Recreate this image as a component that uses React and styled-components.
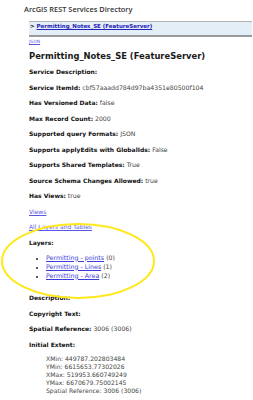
import React from "react";
import styled, { createGlobalStyle } from "styled-components";

const Global = createGlobalStyle`
  html, body { margin: 0; padding: 0; background: #fff; }
  body { font-family: "DejaVu Sans", Verdana, sans-serif; color: #000; }
  a { color: inherit; }
`;

const Page = styled.div`
  position: relative;
  width: 253px;
  height: 400px;
  overflow: hidden;
`;

const Title = styled.div`
  font-family: "Open Sans", "Noto Sans", sans-serif;
  font-weight: 600;
  font-size: 7.4px;
  line-height: 18px;
  color: #333;
  padding-left: 24px;
  white-space: nowrap;
`;

const Content = styled.div`
  padding-left: 29px;
`;

const Crumbs = styled.div`
  margin-top: 3px;
  margin-right: 1px;
  background: #e4eef7;
  border-top: 1px solid #b4b4b4;
  border-bottom: 2px solid #9a9a9a;
  font-size: 5.5px;
  font-weight: bold;
  line-height: 9px;
  padding: 0 0 4px 1px;
  white-space: nowrap;
`;

const CrumbLink = styled.a`
  color: #2424b8;
  text-decoration: underline;
`;

const Small = styled.div`
  margin-top: 1px;
  font-size: 4.5px;
  line-height: 8px;
`;

const LightLink = styled.a`
  color: ${(p) => p.$tone || "#5858e4"};
  text-decoration: underline;
`;

const Heading = styled.h2`
  margin: 4px 0 2.25px;
  font-size: 8.4px;
  line-height: 12px;
  font-weight: bold;
  color: #1a1a1a;
  white-space: nowrap;
`;

const Row = styled.div`
  font-size: 6px;
  line-height: 15.5px;
  white-space: nowrap;
  margin-top: ${(p) => p.$gap || 0}px;
`;

const Label = styled.b`
  font-weight: bold;
  color: #111;
`;

const Value = styled.span`
  font-size: 6.2px;
  color: #444;
`;

const List = styled.ul`
  margin: 2.25px 0 0;
  padding-left: 17px;
  font-size: 6.3px;
  line-height: 9px;
  list-style: disc;
`;

const Item = styled.li`
  white-space: nowrap;
  &::marker { color: #222; font-size: 5px; }
`;

const Extent = styled.div`
  margin-top: 2.8px;
  padding-left: 17px;
  font-size: 6.1px;
  line-height: 7.9px;
  color: #444;
  white-space: nowrap;
`;

const Circle = styled.svg`
  position: absolute;
  left: 0;
  top: 221px;
  width: 160px;
  height: 82px;
  pointer-events: none;
`;

const rows = [
  ["Service Description:", ""],
  ["Service ItemId:", "cbf57aaadd784d97ba4351e80500f104"],
  ["Has Versioned Data:", "false"],
  ["Max Record Count:", "2000"],
  ["Supported query Formats:", "JSON"],
  ["Supports applyEdits with GlobalIds:", "False"],
  ["Supports Shared Templates:", "True"],
  ["Source Schema Changes Allowed:", "true"],
  ["Has Views:", "true"],
];

const layers = [
  ["Permitting - points", 0],
  ["Permitting - Lines", 1],
  ["Permitting - Area", 2],
];

export default function App() {
  return (
    <Page>
      <Global />
      <Title>ArcGIS REST Services Directory</Title>
      <Content>
        <Crumbs>
          &gt; <CrumbLink href="#">Permitting_Notes_SE (FeatureServer)</CrumbLink>
        </Crumbs>
        <Small>
          <LightLink href="#">JSON</LightLink>
        </Small>
        <Heading>Permitting_Notes_SE (FeatureServer)</Heading>
        {rows.map(([l, v]) => (
          <Row key={l}>
            <Label>{l}</Label> <Value>{v}</Value>
          </Row>
        ))}
        <Row>
          <LightLink href="#">Views</LightLink>
        </Row>
        <Row>
          <LightLink href="#">All Layers and Tables</LightLink>
        </Row>
        <Row>
          <Label>Layers:</Label>
        </Row>
        <List>
          {layers.map(([n, i]) => (
            <Item key={n}>
              <LightLink href="#" $tone="#3c3cdc">{n}</LightLink> <Value>({i})</Value>
            </Item>
          ))}
        </List>
        <Row $gap={10.75}>
          <Label>Description:</Label>
        </Row>
        <Row>
          <Label>Copyright Text:</Label>
        </Row>
        <Row>
          <Label>Spatial Reference:</Label> <Value>3006 (3006)</Value>
        </Row>
        <Row>
          <Label>Initial Extent:</Label>
        </Row>
        <Extent>
          <div>XMin: 449787.202803484</div>
          <div>YMin: 6615653.77302026</div>
          <div>XMax: 519953.660749249</div>
          <div>YMax: 6670679.75002145</div>
          <div>Spatial Reference: 3006 (3006)</div>
        </Extent>
      </Content>
      <Circle viewBox="0 0 160 82">
        <ellipse cx="78" cy="40" rx="76" ry="37" fill="none" stroke="#ffe81a" strokeWidth="2" />
      </Circle>
    </Page>
  );
}
